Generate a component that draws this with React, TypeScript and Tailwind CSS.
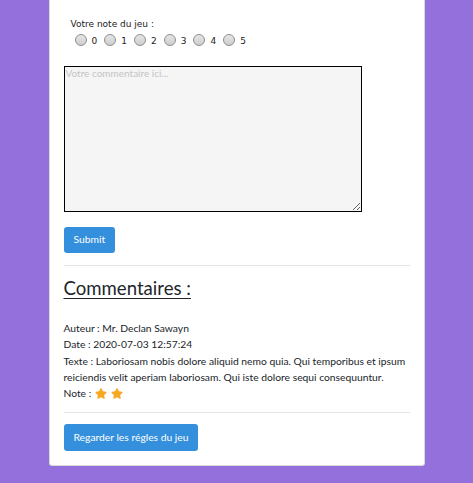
import React from "react";

const Star = () => (
  <svg viewBox="0 0 576 512" className="inline-block w-[12px] h-[11px] align-[-1px]">
    <path
      fill="#f7a823"
      d="M259.3 17.8L194 150.2 47.9 171.5c-26.2 3.8-36.7 36.1-17.7 54.6l105.7 103-25 145.5c-4.5 26.3 23.2 46 46.4 33.7L288 439.6l130.7 68.7c23.2 12.2 50.9-7.4 46.4-33.7l-25-145.5 105.7-103c19-18.5 8.5-50.8-17.7-54.6L382 150.2 316.7 17.8c-11.7-23.6-45.6-23.9-57.4 0z"
    />
  </svg>
);

const Radio = ({ value }: { value: number }) => (
  <label className="flex items-end mr-[7px]">
    <span className="w-[12px] h-[12px] rounded-full border border-[#8f8f8f] bg-gradient-to-b from-[#e6e6e6] to-[#cdcdcd] mr-[5px]" />
    <span className="text-[9px] leading-[10px] text-[#222]">{value}</span>
  </label>
);

const App = () => {
  const notes = [0, 1, 2, 3, 4, 5];

  return (
    <div className="min-h-[483px] bg-[#9370db] flex justify-center font-['Lato',sans-serif] text-[#212529]">
      <div className="w-[376px] h-[466px] bg-white border border-t-0 border-black/15 rounded-b-[3px] px-[14px] pb-[14px]">
        {/* note form */}
        <div className="pl-[7px] pt-[17px] font-['DejaVu_Sans',sans-serif]">
          <div className="text-[9px] leading-[14px] text-[#222]">Votre note du jeu :</div>
          <div className="flex pl-[4px] mt-[3px]">
            {notes.map((n) => (
              <Radio key={n} value={n} />
            ))}
          </div>
        </div>

        <textarea
          placeholder="Votre commentaire ici..."
          className="block mt-[20px] w-[298px] h-[146px] border border-black bg-[#f5f5f5] text-[10px] leading-[13px] px-px placeholder:text-[#c4c4c4] font-['Lato',sans-serif]"
        />

        <button className="mt-[15px] h-[26px] px-[10px] rounded-[3px] bg-[#3490dc] text-white text-[10.3px]">
          Submit
        </button>

        <hr className="mt-[12px] border-black/10" />

        <h3 className="mt-[11px] text-[18.6px] leading-[23px] underline underline-offset-[3px] decoration-1">
          Commentaires :
        </h3>

        <div className="mt-[20px] text-[10.3px] leading-[16.3px]">
          <p>Auteur : Mr. Declan Sawayn</p>
          <p>Date : 2020-07-03 12:57:24</p>
          <p>
            Texte : Laboriosam nobis dolore aliquid nemo quia. Qui temporibus et ipsum reiciendis velit aperiam
            laboriosam. Qui iste dolore sequi consequuntur.
          </p>
          <p className="flex items-center gap-[4px]">
            Note : <Star /> <Star />
          </p>
        </div>

        <hr className="mt-[11px] border-black/10" />

        <button className="mt-[11px] h-[27px] px-[10px] rounded-[3px] bg-[#3490dc] text-white text-[10.3px]">
          Regarder les régles du jeu
        </button>
      </div>
    </div>
  );
};

export default App;
